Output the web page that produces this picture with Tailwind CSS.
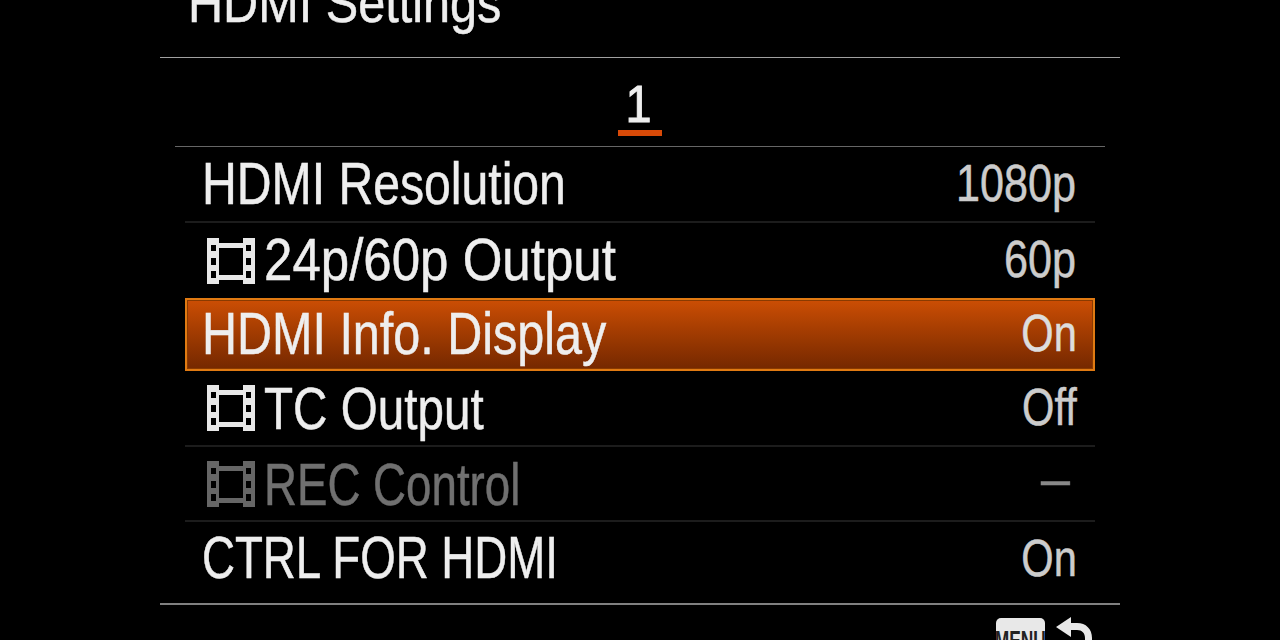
<!DOCTYPE html>
<html lang="en">
<head>
  <meta charset="UTF-8">
  <title>HDMI Settings</title>
  <script src="https://cdn.jsdelivr.net/npm/@tailwindcss/browser@4"></script>
</head>
<body class="bg-black h-[640px] overflow-hidden font-['Liberation_Sans',Arial,sans-serif] text-[#eeeeee] [-webkit-text-stroke:0.5px_currentColor]">
  <!-- header -->
  <div class="mx-[160px] h-[58px] border-b border-[#a0a0a0] relative">
    <div class="absolute left-[28px] bottom-[24px] text-[56px] leading-[60px] origin-left scale-x-[0.868] whitespace-nowrap">HDMI Settings</div>
  </div>

  <!-- page tab -->
  <div class="mx-[175px] h-[89px] border-b border-[#666] flex flex-col items-center pt-[19px]">
    <div class="text-[52px] leading-[54px] h-[53px] pr-[3px] scale-x-[0.9] [-webkit-text-stroke:1px_currentColor]">1</div>
    <div class="w-[44px] h-[6px] bg-[#d84a08] mr-[1px]"></div>
  </div>

  <!-- rows -->
  <div class="mx-[185px]">
    <div class="h-[76px] border-b-2 border-[#1c1c1c] flex items-center justify-between px-[17px]">
      <span class="text-[59px] leading-none origin-left scale-x-[0.816] whitespace-nowrap">HDMI Resolution</span>
      <span class="text-[52px] leading-none origin-right scale-x-[0.83] text-[#cccccc] pr-[2px] pb-[2px]">1080p</span>
    </div>
    <div class="h-[75px] flex items-center justify-between pl-[22px] pr-[17px]">
      <div class="flex items-center gap-[9px]">
        <svg class="w-[48px] h-[46px] shrink-0 text-[#e8e8e8]" viewBox="0 0 48 46"><path fill="currentColor" fill-rule="evenodd" d="M0 0h12v5h24V0h12v46H36v-4H12v4H0zM4 7v6h5V7zM4 20v7h5v-7zM4 33v7h5v-7zM39 7v6h5V7zM39 20v7h5v-7zM39 33v7h5v-7zM12 10v27h24V10z"/></svg>
        <span class="text-[59px] leading-none origin-left scale-x-[0.865] whitespace-nowrap">24p/60p Output</span>
      </div>
      <span class="text-[52px] leading-none origin-right scale-x-[0.83] text-[#cccccc] pr-[2px] pb-[4px]">60p</span>
    </div>
    <div class="h-[73px] border-2 border-[#e07a12] bg-gradient-to-b from-[#cc4e04] to-[#752800] shadow-[inset_0_0_0_1px_#8a3a00] flex items-center justify-between px-[15px]">
      <span class="text-[59px] leading-none origin-left scale-x-[0.822] whitespace-nowrap">HDMI Info. Display</span>
      <span class="text-[52px] leading-none origin-right scale-x-[0.8] text-[#dddddd] pr-[2px] pb-[4px]">On</span>
    </div>
    <div class="h-[76px] border-b-2 border-[#1c1c1c] flex items-center justify-between pl-[22px] pr-[17px]">
      <div class="flex items-center gap-[9px]">
        <svg class="w-[48px] h-[46px] shrink-0 text-[#e8e8e8]" viewBox="0 0 48 46"><path fill="currentColor" fill-rule="evenodd" d="M0 0h12v5h24V0h12v46H36v-4H12v4H0zM4 7v6h5V7zM4 20v7h5v-7zM4 33v7h5v-7zM39 7v6h5V7zM39 20v7h5v-7zM39 33v7h5v-7zM12 10v27h24V10z"/></svg>
        <span class="text-[59px] leading-none origin-left scale-x-[0.807] whitespace-nowrap pt-[3px]">TC Output</span>
      </div>
      <span class="text-[52px] leading-none origin-right scale-x-[0.8] text-[#cccccc] pr-[2px] pb-[2px]">Off</span>
    </div>
    <div class="h-[75px] border-b-2 border-[#1c1c1c] flex items-center justify-between pl-[22px] pr-[17px]">
      <div class="flex items-center gap-[9px]">
        <svg class="w-[48px] h-[46px] shrink-0 text-[#666666]" viewBox="0 0 48 46"><path fill="currentColor" fill-rule="evenodd" d="M0 0h12v5h24V0h12v46H36v-4H12v4H0zM4 7v6h5V7zM4 20v7h5v-7zM4 33v7h5v-7zM39 7v6h5V7zM39 20v7h5v-7zM39 33v7h5v-7zM12 10v27h24V10z"/></svg>
        <span class="text-[59px] leading-none origin-left scale-x-[0.774] whitespace-nowrap text-[#707070] pt-[3px]">REC Control</span>
      </div>
      <span class="text-[52px] leading-none origin-right text-[#888888] pr-[8px] pb-[12px]">–</span>
    </div>
    <div class="h-[81px] flex items-center justify-between px-[17px] pb-[8px]">
      <span class="text-[59px] leading-none origin-left scale-x-[0.774] whitespace-nowrap">CTRL FOR HDMI</span>
      <span class="text-[52px] leading-none origin-right scale-x-[0.8] text-[#cccccc] pr-[2px] pb-[2px]">On</span>
    </div>
  </div>

  <!-- footer -->
  <div class="mx-[160px] border-t-2 border-[#808080] flex justify-end pt-[13px] pr-[28px] gap-[11px]">
    <div class="w-[49px] h-[44px] bg-[#e8e8e8] rounded-[5px] pt-[9px] text-center text-[28px] leading-none font-bold text-[#222] overflow-hidden [-webkit-text-stroke:0] flex justify-center"><span class="inline-block scale-x-[0.62]">MENU</span></div>
    <svg class="w-[36px] h-[36px] -mt-[1px]" viewBox="0 0 36 36"><path fill="#e8e8e8" d="M0 10 15 0v6h6c9 0 15 6 15 15v15h-7V21c0-5-3-8-8-8h-6v7z"/></svg>
  </div>
</body>
</html>
